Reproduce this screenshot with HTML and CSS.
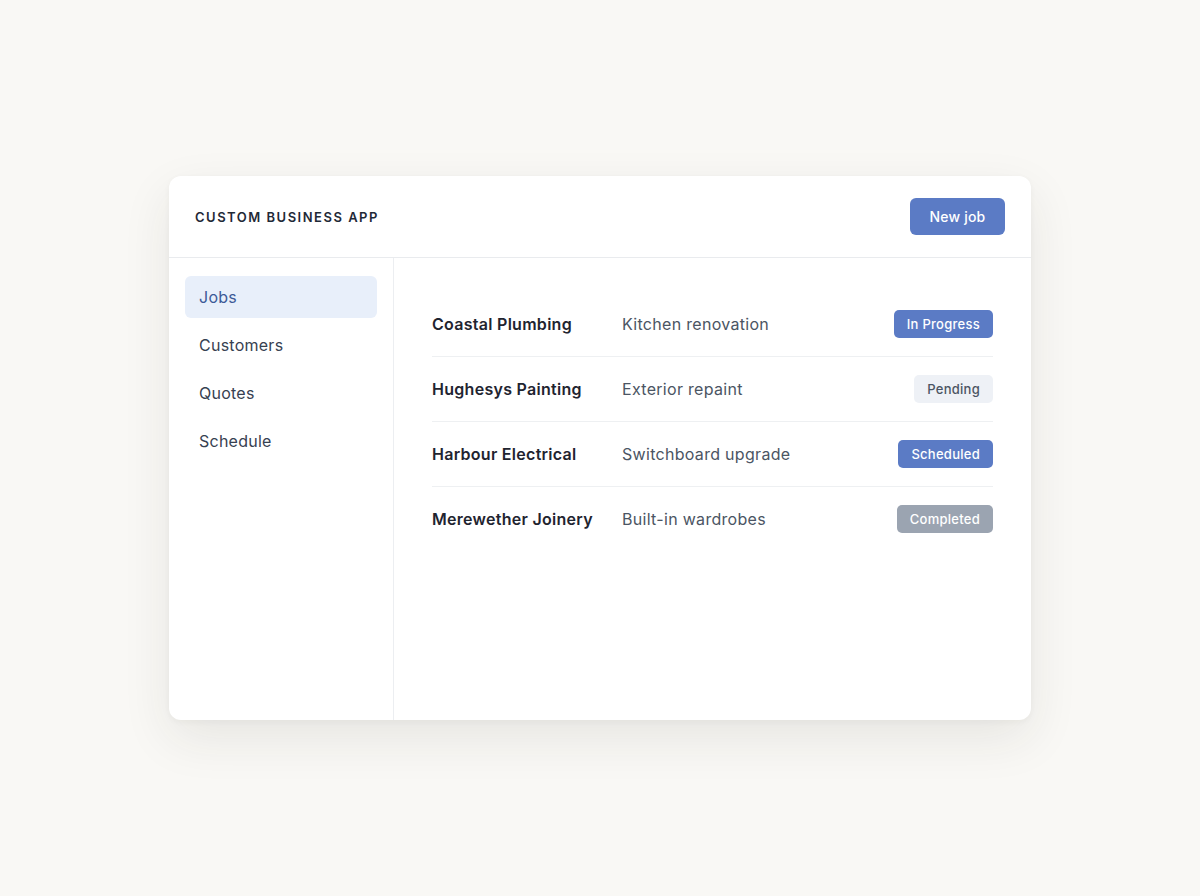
FILE: index.html
```html
<!DOCTYPE html>
<html lang="en">
<head>
<meta charset="utf-8">
<title>Custom Business App</title>
<link rel="stylesheet" href="styles.css">
</head>
<body>
<div class="page">
  <div class="card">
    <header class="header">
      <div class="title">CUSTOM BUSINESS APP</div>
      <button class="btn">New job</button>
    </header>
    <div class="body">
      <nav class="sidebar">
        <a class="nav-item active">Jobs</a>
        <a class="nav-item">Customers</a>
        <a class="nav-item">Quotes</a>
        <a class="nav-item">Schedule</a>
      </nav>
      <main class="main">
        <div class="row">
          <div class="name">Coastal Plumbing</div>
          <div class="desc">Kitchen renovation</div>
          <span class="badge blue">In Progress</span>
        </div>
        <div class="row">
          <div class="name">Hughesys Painting</div>
          <div class="desc">Exterior repaint</div>
          <span class="badge light">Pending</span>
        </div>
        <div class="row">
          <div class="name">Harbour Electrical</div>
          <div class="desc">Switchboard upgrade</div>
          <span class="badge blue">Scheduled</span>
        </div>
        <div class="row">
          <div class="name">Merewether Joinery</div>
          <div class="desc">Built-in wardrobes</div>
          <span class="badge grey">Completed</span>
        </div>
      </main>
    </div>
  </div>
</div>
</body>
</html>
```

FILE: styles.css
```css
* { box-sizing: border-box; }
html, body {
  margin: 0;
  padding: 0;
  background: #f9f8f5;
  font-family: Inter, "Noto Sans", sans-serif;
  -webkit-font-smoothing: antialiased;
}
.page {
  width: 1200px;
  height: 896px;
  display: flex;
  align-items: center;
  justify-content: center;
}
.card {
  width: 862px;
  height: 544px;
  background: #ffffff;
  border-radius: 12px;
  box-shadow: 0 18px 50px rgba(40, 40, 30, 0.09), 0 2px 6px rgba(40, 40, 30, 0.04);
  display: flex;
  flex-direction: column;
  overflow: hidden;
}
.header {
  height: 82px;
  flex: none;
  border-bottom: 1px solid #e9ebee;
  display: flex;
  align-items: center;
  justify-content: space-between;
  padding: 0 26px;
}
.title {
  font-size: 13px;
  font-weight: 600;
  letter-spacing: 1.5px;
  color: #1f2937;
}
.btn {
  height: 37px;
  width: 95px;
  padding: 0;
  border: none;
  border-radius: 6px;
  background: #5b7bc5;
  color: #ffffff;
  font-family: inherit;
  font-size: 14px;
  font-weight: 500;
  letter-spacing: 0.2px;
}
.body {
  flex: 1;
  display: flex;
}
.sidebar {
  width: 225px;
  flex: none;
  border-right: 1px solid #eceef1;
  padding: 18px 16px;
  display: flex;
  flex-direction: column;
  gap: 6px;
}
.nav-item {
  height: 42px;
  display: flex;
  align-items: center;
  padding: 0 14px;
  border-radius: 6px;
  font-size: 16px;
  letter-spacing: 0.25px;
  color: #374151;
}
.nav-item.active {
  background: #e8effa;
  color: #3d5a97;
}
.main {
  flex: 1;
  padding: 34px 38px;
  display: flex;
  flex-direction: column;
}
.row {
  height: 65px;
  display: flex;
  align-items: center;
  border-bottom: 1px solid #eef0f2;
}
.row:last-child { border-bottom-color: transparent; }
.name {
  width: 190px;
  font-size: 16px;
  font-weight: 600;
  letter-spacing: 0.28px;
  color: #1f2430;
}
.desc {
  flex: 1;
  font-size: 16px;
  letter-spacing: 0.3px;
  color: #4b5563;
}
.badge {
  height: 28px;
  padding: 0 13px;
  border-radius: 5px;
  display: flex;
  align-items: center;
  font-size: 13px;
  font-weight: 500;
  letter-spacing: 0.27px;
}
.badge.blue { background: #5b7bc5; color: #ffffff; }
.badge.light { background: #eef1f6; color: #4b5563; }
.badge.grey { background: #9ba4b1; color: #ffffff; }
```
